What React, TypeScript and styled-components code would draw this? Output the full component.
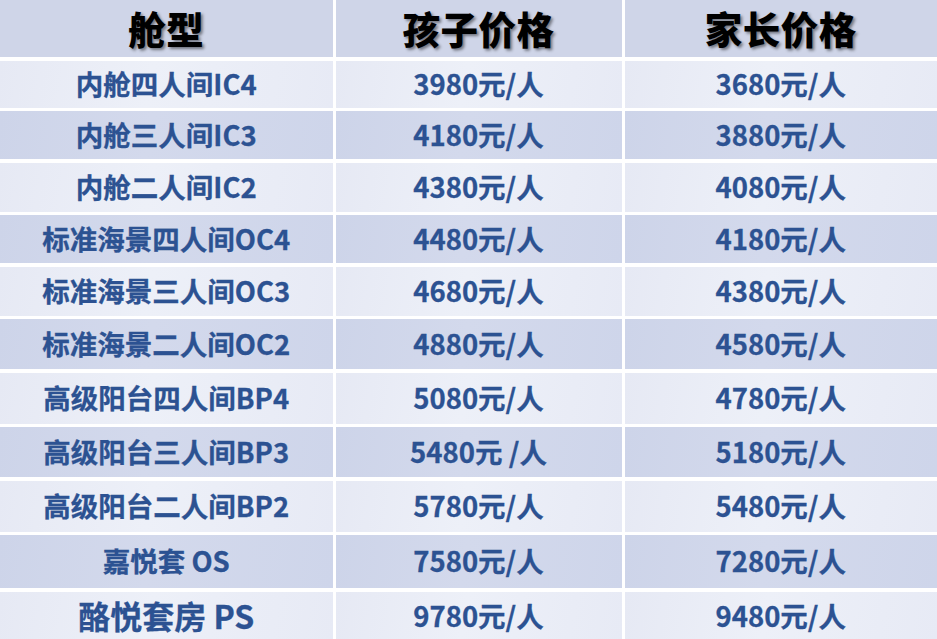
import React from "react"
import styled, { createGlobalStyle } from "styled-components"

const GlobalStyle = createGlobalStyle`
  html, body {
    margin: 0;
    padding: 0;
    background: #ffffff;
  }
  body {
    font-family: "Noto Sans CJK SC", "Noto Sans", sans-serif;
    overflow: hidden;
  }
`

const Table = styled.div`
  display: grid;
  grid-template-columns: 332.5px 286px 1fr;
  grid-template-rows: 57px 47px 48px 49px 48px 49px 50px 51px 50px 51px 53px 49px;
  column-gap: 3px;
  row-gap: 3.5px;
  width: 937px;
  height: 639px;
  overflow: hidden;
  background: #ffffff;
`

const HeaderCell = styled.div`
  display: flex;
  align-items: center;
  justify-content: center;
  background: #cfd5e8;
  color: #000000;
  font-size: 37.5px;
  font-weight: 900;
  letter-spacing: 0.5px;
  text-shadow: 2px 2px 3px rgba(0, 0, 0, 0.45);
  padding-bottom: 3px;
`

const Cell = styled.div<{ $tone: "light" | "dark"; $big?: boolean }>`
  display: flex;
  align-items: center;
  justify-content: center;
  background: ${(p) =>
    p.$tone === "light"
      ? "linear-gradient(100deg, #e6e9f4 0%, #edf0f8 45%, #e7eaf5 100%)"
      : "linear-gradient(100deg, #cdd4e9 0%, #d3d9ec 45%, #ced5ea 100%)"};
  color: #2c5292;
  font-size: ${(p) => (p.$big ? "32px" : "27.5px")};
  font-weight: 700;
  -webkit-text-stroke: 0.3px #2c5292;
  padding-bottom: 3px;
  white-space: pre;
`

const rows: { name: string; kid: string; parent: string; big?: boolean }[] = [
  { name: "内舱四人间IC4", kid: "3980元/人", parent: "3680元/人" },
  { name: "内舱三人间IC3", kid: "4180元/人", parent: "3880元/人" },
  { name: "内舱二人间IC2", kid: "4380元/人", parent: "4080元/人" },
  { name: "标准海景四人间OC4", kid: "4480元/人", parent: "4180元/人" },
  { name: "标准海景三人间OC3", kid: "4680元/人", parent: "4380元/人" },
  { name: "标准海景二人间OC2", kid: "4880元/人", parent: "4580元/人" },
  { name: "高级阳台四人间BP4", kid: "5080元/人", parent: "4780元/人" },
  { name: "高级阳台三人间BP3", kid: "5480元 /人", parent: "5180元/人" },
  { name: "高级阳台二人间BP2", kid: "5780元/人", parent: "5480元/人" },
  { name: "嘉悦套 OS", kid: "7580元/人", parent: "7280元/人" },
  { name: "酪悦套房 PS", kid: "9780元/人", parent: "9480元/人", big: true },
]

export default function App() {
  return (
    <>
      <GlobalStyle />
      <Table>
        <HeaderCell>舱型</HeaderCell>
        <HeaderCell>孩子价格</HeaderCell>
        <HeaderCell>家长价格</HeaderCell>
        {rows.map((r, i) => {
          const tone = i % 2 === 0 ? "light" : "dark"
          return (
            <React.Fragment key={r.name}>
              <Cell $tone={tone} $big={r.big}>{r.name}</Cell>
              <Cell $tone={tone}>{r.kid}</Cell>
              <Cell $tone={tone}>{r.parent}</Cell>
            </React.Fragment>
          )
        })}
      </Table>
    </>
  )
}
